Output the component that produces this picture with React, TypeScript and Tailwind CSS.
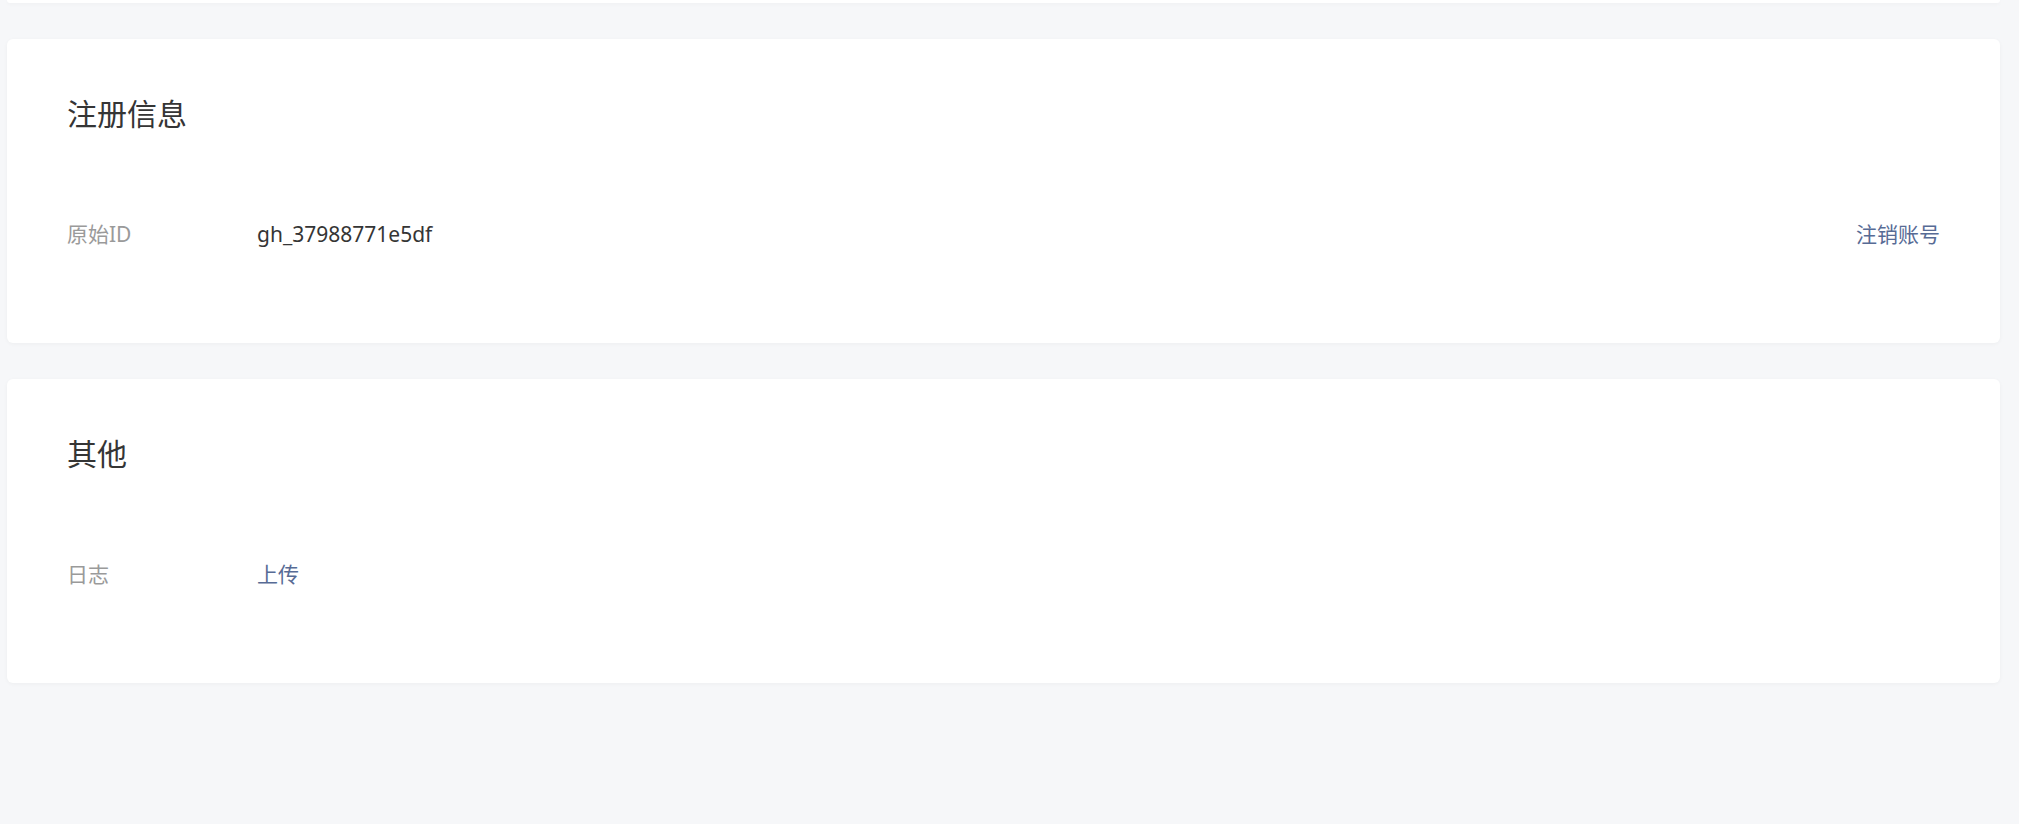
const font = { fontFamily: '"Noto Sans", "Noto Sans CJK SC", sans-serif' };

function Row({ label, children, action }: { label: string; children: React.ReactNode; action?: React.ReactNode }) {
  return (
    <div className="flex items-center h-[60px]">
      <div className="w-[190px] shrink-0 text-[21px] text-[#9a9a9a]">{label}</div>
      <div className="flex-1 text-[21px]">{children}</div>
      {action}
    </div>
  );
}

function Card({ title, children }: { title: string; children: React.ReactNode }) {
  return (
    <div className="bg-white rounded-[6px] shadow-[0_1px_4px_rgba(0,0,0,0.04)] h-[304px] px-[60px] pt-[55px]">
      <h2 className="text-[30px] leading-[40px] text-[#353535]">{title}</h2>
      <div className="mt-[71px]">{children}</div>
    </div>
  );
}

export default function App() {
  return (
    <div className="min-h-screen h-[824px] bg-[#f6f7f9] pl-[7px] pr-[19px]" style={font}>
      <div className="h-[3px] bg-white rounded-b-[6px] shadow-[0_1px_4px_rgba(0,0,0,0.04)]"></div>

      <div className="mt-[36px] flex flex-col gap-[36px]">
        <Card title="注册信息">
          <Row
            label="原始ID"
            action={<a className="text-[21px] text-[#576b95] cursor-pointer">注销账号</a>}
          >
            <span className="text-[#353535]">gh_37988771e5df</span>
          </Row>
        </Card>

        <Card title="其他">
          <Row label="日志">
            <a className="text-[#576b95] cursor-pointer">上传</a>
          </Row>
        </Card>
      </div>
    </div>
  );
}
